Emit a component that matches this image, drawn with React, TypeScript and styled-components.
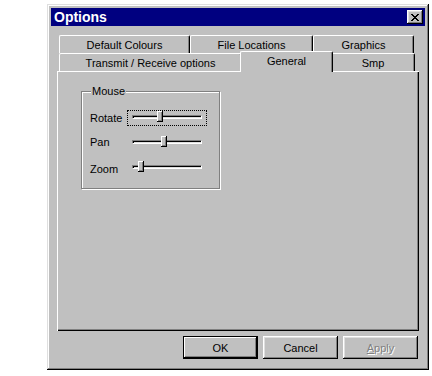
import React from "react";
import styled, { createGlobalStyle } from "styled-components";

const GlobalStyle = createGlobalStyle`
  html, body { margin: 0; padding: 0; background: #ffffff; }
  body { font-family: "Liberation Sans", Arial, sans-serif; font-size: 11px; color: #000; }
`;

const Stage = styled.div`
  width: 432px;
  height: 376px;
  box-sizing: border-box;
  padding: 4px 0 0 47px;
`;

const Window = styled.div`
  width: 382px;
  height: 366px;
  box-sizing: border-box;
  padding: 4px;
  background: #c0c0c0;
  box-shadow: inset -1px -1px #000, inset 1px 1px #dfdfdf, inset -2px -2px #808080, inset 2px 2px #fff;
  display: flex;
  flex-direction: column;
`;

const TitleBar = styled.div`
  height: 18px;
  flex: none;
  background: #000080;
  color: #fff;
  display: flex;
  align-items: center;
  justify-content: space-between;
  padding: 0 2px 0 3px;
  font: bold 14px "Liberation Sans", Arial, sans-serif;
`;

const CloseButton = styled.button`
  width: 16px;
  height: 14px;
  padding: 0;
  border: none;
  background: #c0c0c0;
  box-shadow: inset -1px -1px #000, inset 1px 1px #fff, inset -2px -2px #808080, inset 2px 2px #dfdfdf;
  display: flex;
  align-items: center;
  justify-content: center;
`;

const Body = styled.div`
  flex: 1;
  display: flex;
  flex-direction: column;
  padding: 9px 6px 0 6px;
`;

const TabRows = styled.div`
  display: flex;
  flex-direction: column;
  padding-left: 2px;
`;

const TabRow = styled.div`
  display: flex;
  height: 18px;
`;

const Tab = styled.div<{ $w: number; $selected?: boolean }>`
  width: ${(p) => p.$w}px;
  height: ${(p) => (p.$selected ? 21 : 18)}px;
  margin: ${(p) => (p.$selected ? "-2px -2px 0 -2px" : "0")};
  padding-bottom: ${(p) => (p.$selected ? 3 : 0)}px;
  position: ${(p) => (p.$selected ? "relative" : "static")};
  z-index: ${(p) => (p.$selected ? 2 : "auto")};
  flex: none;
  box-sizing: border-box;
  background: #c0c0c0;
  border-top: 1px solid #fff;
  border-left: 1px solid #fff;
  border-right: 1px solid #000;
  border-radius: 2px 2px 0 0;
  box-shadow: inset -1px 0 #808080;
  display: flex;
  align-items: center;
  justify-content: center;
  font-size: 11px;
  white-space: nowrap;
`;

const Panel = styled.div`
  height: 260px;
  flex: none;
  box-sizing: border-box;
  background: #c0c0c0;
  box-shadow: inset 1px 1px #fff, inset -1px -1px #000, inset -2px -2px #808080;
  padding: 20px 0 0 24px;
`;

const GroupBox = styled.div`
  position: relative;
  width: 139px;
  height: 98px;
  box-sizing: border-box;
  border: 1px solid #808080;
  box-shadow: inset 1px 1px #fff, 1px 1px #fff;
  padding: 18px 0 0 8px;
  display: flex;
  flex-direction: column;
  gap: 9px;
`;

const Legend = styled.span`
  position: absolute;
  top: -7px;
  left: 9px;
  padding: 0 1px;
  background: #c0c0c0;
  line-height: 13px;
`;

const SliderRow = styled.div`
  display: flex;
  align-items: center;
  height: 16px;
`;

const SliderLabel = styled.span<{ $dy: number }>`
  width: 37px;
  flex: none;
  transform: translateY(${(p) => p.$dy}px);
`;

const Slider = styled.div<{ $focused?: boolean }>`
  position: relative;
  width: 80px;
  height: 16px;
  box-sizing: border-box;
  border: 1px dotted ${(p) => (p.$focused ? "#000" : "transparent")};
`;

const Track = styled.div`
  position: absolute;
  left: 4px;
  top: 4px;
  width: 70px;
  height: 4px;
  box-sizing: border-box;
  border-top: 1px solid #808080;
  border-left: 1px solid #808080;
  border-bottom: 1px solid #fff;
  border-right: 1px solid #fff;
  box-shadow: inset 1px 1px #000, inset -1px -1px #dfdfdf;
`;

const Thumb = styled.div`
  position: absolute;
  top: 0px;
  width: 6px;
  height: 11px;
  box-sizing: border-box;
  background: #c0c0c0;
  box-shadow: inset -1px -1px #000, inset 1px 1px #fff, inset -2px -2px #808080;
`;

const ButtonRow = styled.div`
  display: flex;
  justify-content: flex-end;
  gap: 5px;
  margin-top: 5px;
  padding-right: 1px;
`;

const Button = styled.button<{ $default?: boolean }>`
  width: 75px;
  height: 23px;
  padding: 0;
  border: none;
  background: #c0c0c0;
  font: 11px "Liberation Sans", Arial, sans-serif;
  color: ${(p) => (p.disabled ? "#808080" : "#000")};
  text-shadow: ${(p) => (p.disabled ? "1px 1px #fff" : "none")};
  box-shadow: ${(p) =>
    p.$default
      ? "inset 1px 1px #000, inset -1px -1px #000, inset -2px -2px #000, inset 2px 2px #fff, inset -3px -3px #808080"
      : "inset -1px -1px #000, inset 1px 1px #fff, inset -2px -2px #808080, inset 2px 2px #dfdfdf"};
`;

const CloseGlyph = () => (
  <svg width="8" height="7" viewBox="0 0 8 7" shapeRendering="crispEdges">
    <path
      fill="#000"
      d="M0 0h2v1H0zM6 0h2v1H6zM1 1h2v1H1zM5 1h2v1H5zM2 2h4v1H2zM3 3h2v1H3zM2 4h4v1H2zM1 5h2v1H1zM5 5h2v1H5zM0 6h2v1H0zM6 6h2v1H6z"
    />
  </svg>
);

const sliders = [
  { label: "Rotate", value: 25, focused: true, dy: 0 },
  { label: "Pan", value: 29, focused: false, dy: -1 },
  { label: "Zoom", value: 6, focused: false, dy: 1 },
];

export default function App() {
  return (
    <>
      <GlobalStyle />
      <Stage>
        <Window>
          <TitleBar>
            <span>Options</span>
            <CloseButton aria-label="Close">
              <CloseGlyph />
            </CloseButton>
          </TitleBar>
          <Body>
            <TabRows>
              <TabRow>
                <Tab $w={131}>Default Colours</Tab>
                <Tab $w={123}>File Locations</Tab>
                <Tab $w={101}>Graphics</Tab>
              </TabRow>
              <TabRow>
                <Tab $w={183}>Transmit / Receive options</Tab>
                <Tab $w={93} $selected>General</Tab>
                <Tab $w={84}>Smp</Tab>
              </TabRow>
            </TabRows>
            <Panel>
              <GroupBox>
                <Legend>Mouse</Legend>
                {sliders.map((s) => (
                  <SliderRow key={s.label}>
                    <SliderLabel $dy={s.dy}>{s.label}</SliderLabel>
                    <Slider $focused={s.focused}>
                      <Track />
                      <Thumb style={{ left: 4 + s.value }} />
                    </Slider>
                  </SliderRow>
                ))}
              </GroupBox>
            </Panel>
            <ButtonRow>
              <Button $default>OK</Button>
              <Button>Cancel</Button>
              <Button disabled>
                <u>A</u>pply
              </Button>
            </ButtonRow>
          </Body>
        </Window>
      </Stage>
    </>
  );
}
